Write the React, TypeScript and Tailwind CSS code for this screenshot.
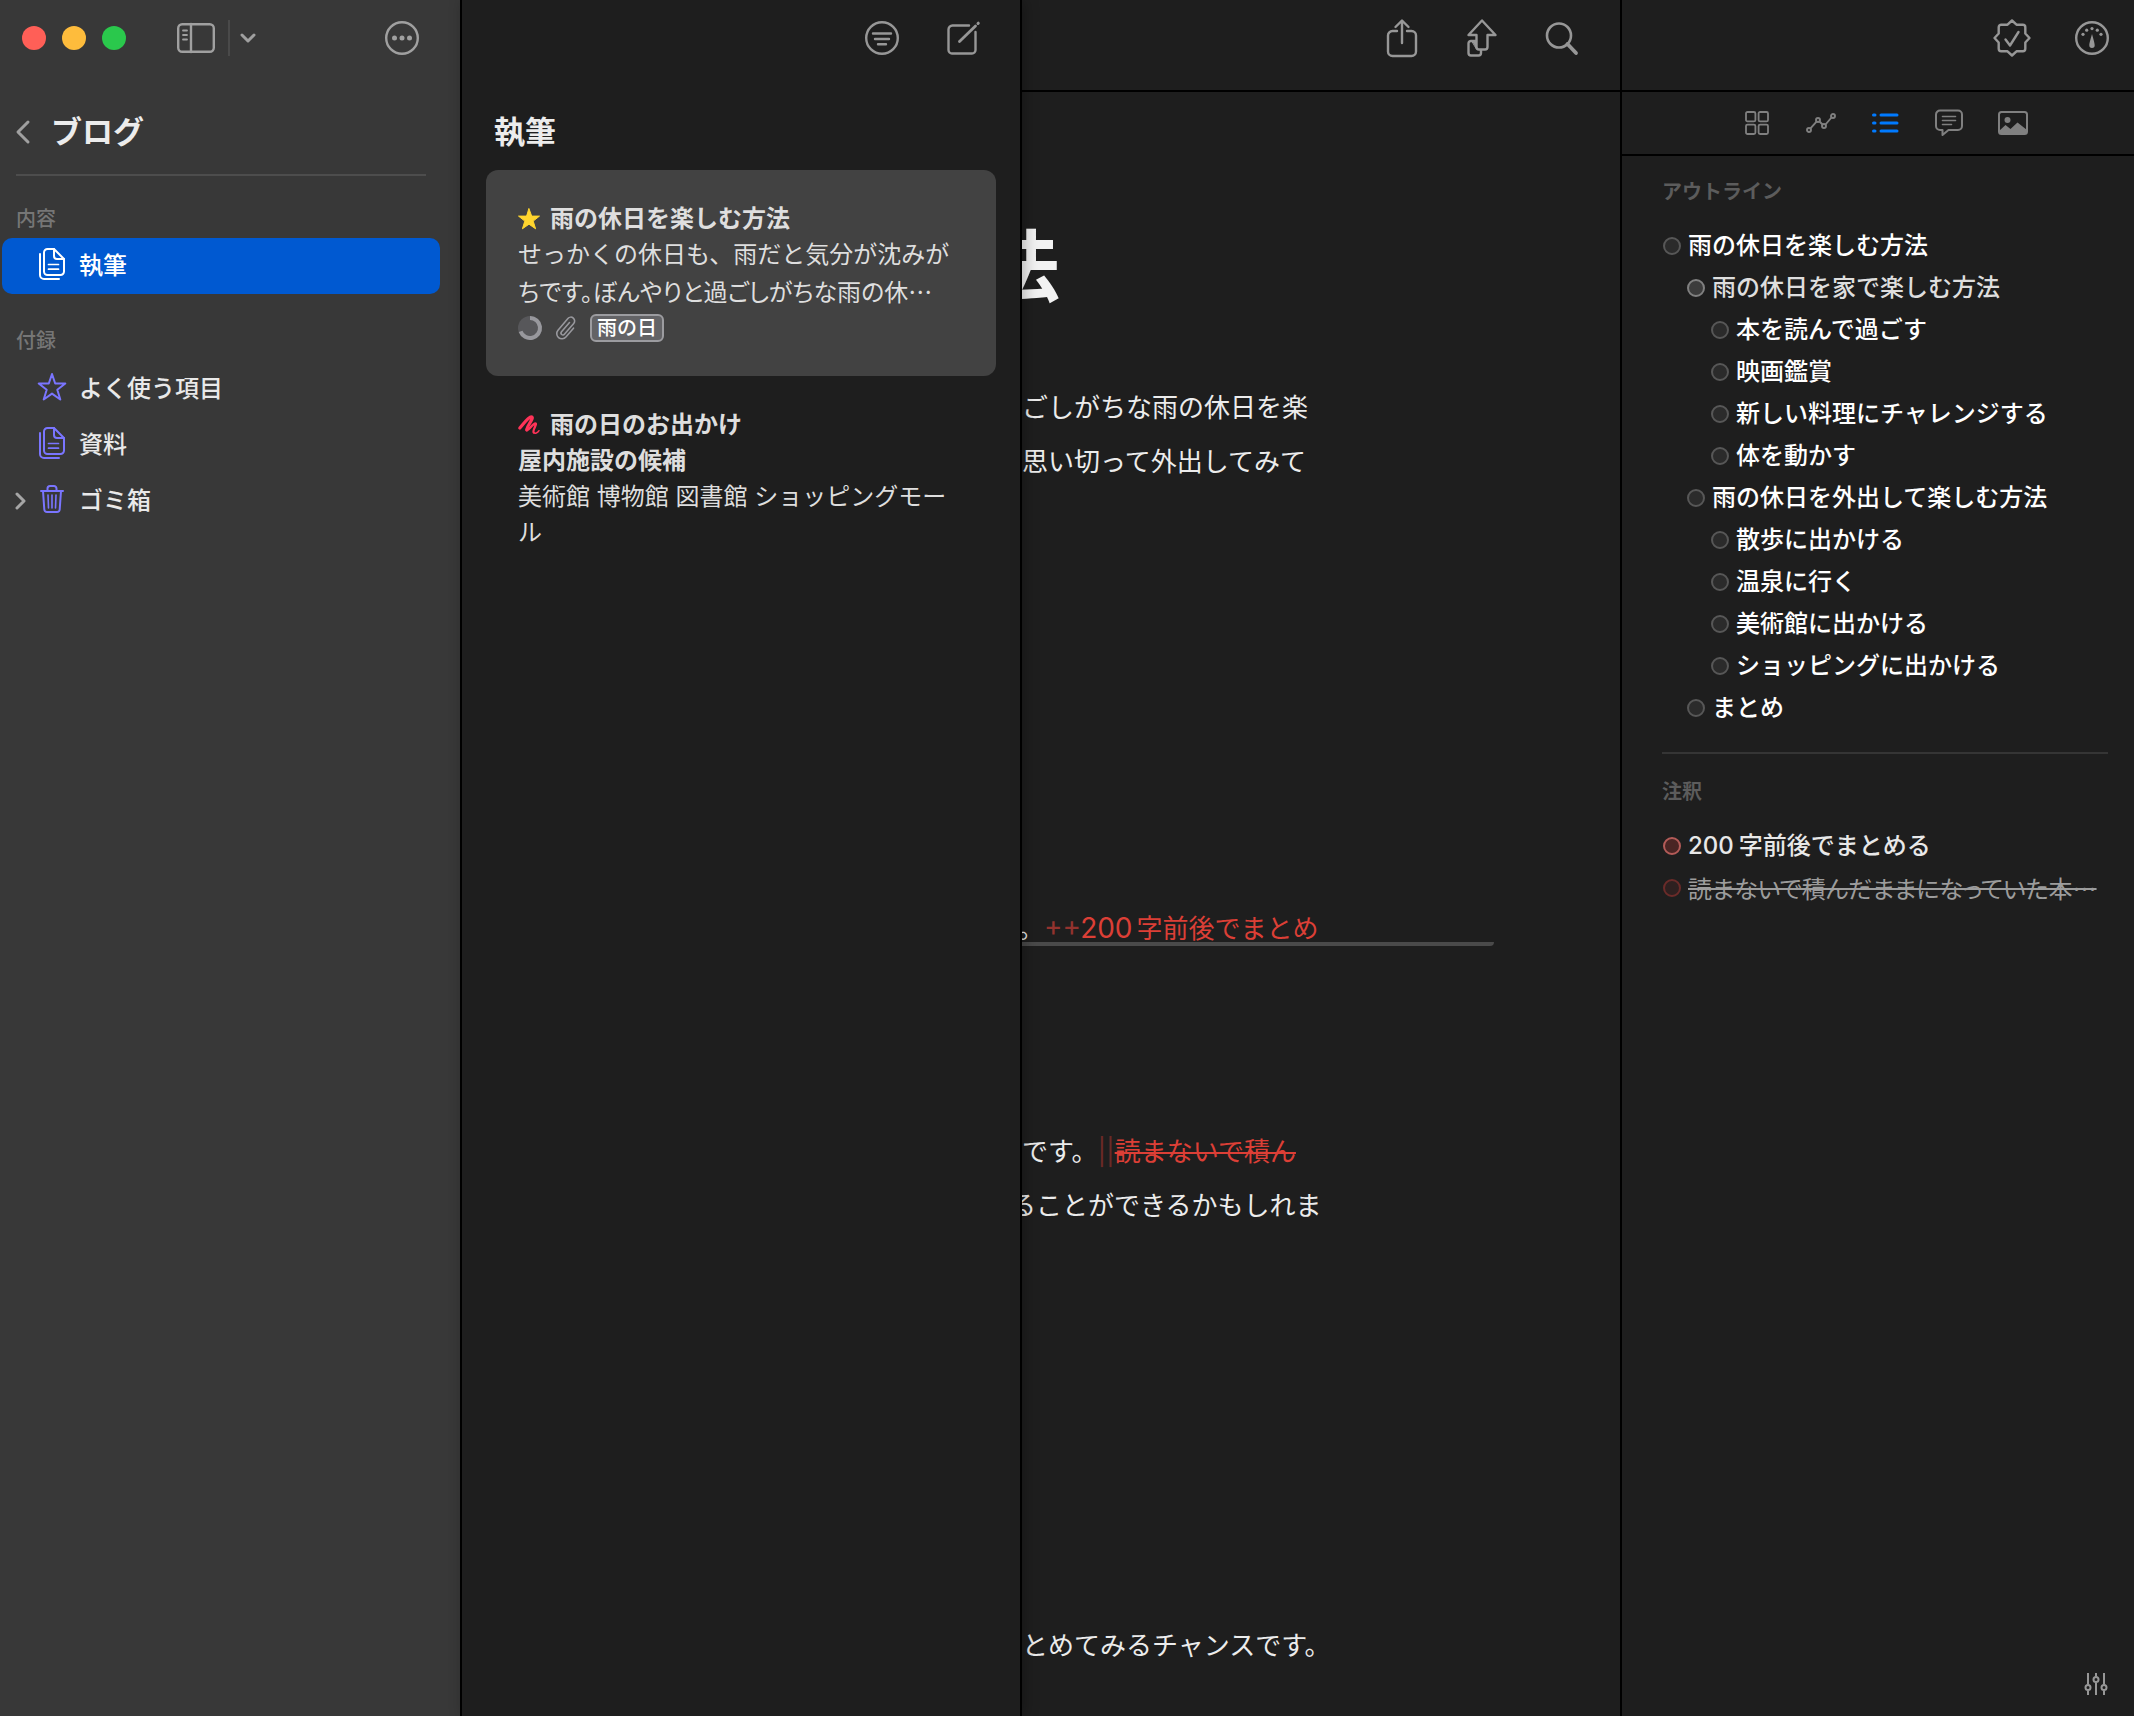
import type { ReactNode } from "react";

type IconProps = { w: number; h: number; sw?: number; className?: string; children: ReactNode };

function Icon({ w, h, sw = 2.4, className = "", children }: IconProps) {
  return (
    <svg
      width={w}
      height={h}
      viewBox={`0 0 ${w} ${h}`}
      fill="none"
      stroke="currentColor"
      strokeWidth={sw}
      strokeLinecap="round"
      strokeLinejoin="round"
      aria-hidden="true"
      className={`shrink-0 overflow-visible ${className}`}
    >
      {children}
    </svg>
  );
}

const SidebarIcon = () => (
  <Icon w={38} h={30}>
    <rect x="1.200" y="1.200" width="35.600" height="27.600" rx="4" />
    <path d="M14 1v28" />
    <path d="M6 7.500h4M6 12h4M6 16.500h4" strokeWidth="1.800" />
  </Icon>
);

const DocsIcon = () => (
  <Icon w={26} h={32} sw={2}>
    <path d="M1 6v21a4 4 0 0 0 4 4h15" />
    <path d="M15 1H8.500a3.500 3.500 0 0 0-3.500 3.500V23.500a3.500 3.500 0 0 0 3.500 3.500h13a3.500 3.500 0 0 0 3.500-3.500V11Z" />
    <path d="M15 1v7a3 3 0 0 0 3 3h7" />
    <path d="M9.500 16.500h10M9.500 21.200h10" strokeWidth="1.700" />
  </Icon>
);

const StarIcon = () => (
  <Icon w={28} h={28} sw={2}>
    <path d="M14 1l3.200 9.500H27.300l-8 6.200 3 9.800-8.300-5.900-8.300 5.900 3-9.800-8-6.200h10.100Z" />
  </Icon>
);

const TrashIcon = () => (
  <Icon w={24} h={28} sw={2}>
    <path d="M1 6h22M7.500 6V3.500a2.500 2.500 0 0 1 2.500-2.500h4a2.500 2.500 0 0 1 2.500 2.500V6" />
    <path d="M3 6l1.300 18.500a2.800 2.800 0 0 0 2.800 2.500h9.800a2.800 2.800 0 0 0 2.800-2.500L21 6" />
    <path d="M8 10l.5 13M12 10v13M16 10l-.5 13" strokeWidth="1.600" />
  </Icon>
);

const MoreIcon = () => (
  <Icon w={34} h={34}>
    <circle cx="17" cy="17" r="15.800" />
    <g fill="currentColor" stroke="none">
      <circle cx="9.500" cy="17" r="2.500" />
      <circle cx="17" cy="17" r="2.500" />
      <circle cx="24.500" cy="17" r="2.500" />
    </g>
  </Icon>
);

const FilterIcon = () => (
  <Icon w={34} h={34}>
    <circle cx="17" cy="17" r="15.800" />
    <path d="M8 12.500h18M10 18h14M13 23.300h8" />
  </Icon>
);

const ComposeIcon = () => (
  <Icon w={34} h={34}>
    <path d="M22 4.500H5.500a4 4 0 0 0-4 4V29A3.500 3.500 0 0 0 5 32.500H25a3.500 3.500 0 0 0 3.500-3.500V11" />
    <path d="M12.500 20.500L28.500 5" strokeWidth="2.800" />
    <path d="M31 2.500l.3-.3" strokeWidth="3" />
  </Icon>
);

const ShareIcon = () => (
  <Icon w={30} h={38}>
    <path d="M10 12H5.500A4.500 4.500 0 0 0 1 16.500v16A4.500 4.500 0 0 0 5.500 37h19a4.500 4.500 0 0 0 4.500-4.500v-16a4.500 4.500 0 0 0-4.500-4.500H20" />
    <path d="M15 24V2M8.500 8L15 1.500 21.500 8" />
  </Icon>
);

const PublishIcon = () => (
  <Icon w={30} h={38}>
    <path d="M15 1.500l13.500 14.500h-8v12a2.500 2.500 0 0 1-2.500 2.500h-6a2.500 2.500 0 0 1-2.500-2.500V16h-8Z" />
    <path d="M9 22H4.500a2.500 2.500 0 0 0-3 2.500V34a2.500 2.500 0 0 0 2.500 2.500h7.500A2.500 2.500 0 0 0 14 34v-3" />
    <path d="M5 22h4v7Z" fill="currentColor" strokeWidth="1" />
  </Icon>
);

const SearchIcon = () => (
  <Icon w={34} h={34}>
    <circle cx="14" cy="14.500" r="12" strokeWidth="2.600" />
    <path d="M22.500 23l8.500 9" strokeWidth="3.800" />
  </Icon>
);

const BadgeIcon = () => (
  <Icon w={38} h={38}>
    <path d="M19 1.500l4.500 4.200h6.300a2.500 2.500 0 0 1 2.500 2.500v6.300L36.500 19l-4.200 4.500v6.300a2.500 2.500 0 0 1-2.500 2.500h-6.300L19 36.500l-4.500-4.200H8.200a2.500 2.500 0 0 1-2.500-2.500v-6.300L1.500 19l4.200-4.500V8.200a2.500 2.500 0 0 1 2.500-2.500h6.300Z" />
    <path d="M12.500 20.500l4.500 6 8.500-13.500" />
  </Icon>
);

const GaugeIcon = () => (
  <Icon w={34} h={34}>
    <circle cx="17" cy="17" r="15.800" />
    <g fill="currentColor" stroke="none">
      <circle cx="8" cy="13.300" r="1.600" />
      <circle cx="11.700" cy="9.200" r="1.600" />
      <circle cx="17" cy="7.600" r="1.600" />
      <circle cx="22.300" cy="9.200" r="1.600" />
      <circle cx="26" cy="13.300" r="1.600" />
      <path d="M17 13c.8 3 2.700 9 2.700 11.200a2.700 2.700 0 0 1-5.400 0C14.300 22 16.200 16 17 13Z" />
    </g>
  </Icon>
);

const GridIcon = () => (
  <Icon w={24} h={24} sw={1.8}>
    <rect x="1" y="1" width="9.400" height="9.400" rx="1.500" />
    <rect x="13.600" y="1" width="9.400" height="9.400" rx="1.500" />
    <rect x="1" y="13.600" width="9.400" height="9.400" rx="1.500" />
    <rect x="13.600" y="13.600" width="9.400" height="9.400" rx="1.500" />
  </Icon>
);

const ChartIcon = () => (
  <Icon w={30} h={20} sw={1.9}>
    <circle cx="3" cy="17" r="2" />
    <circle cx="12" cy="7" r="2" />
    <circle cx="18" cy="13" r="2" />
    <circle cx="27" cy="3" r="2" />
    <path d="M4.500 15.300l6-6.700M13.500 8.500l3 3M19.500 11.500l6-7" />
  </Icon>
);

const ListIcon = () => (
  <Icon w={28} h={20} sw={3}>
    <path d="M2.500 2h1.500M10 2h16M2.500 10h1.500M10 10h16M2.500 18h1.500M10 18h16" />
  </Icon>
);

const CommentIcon = () => (
  <Icon w={28} h={28} sw={2}>
    <path d="M5 1.500h18a4 4 0 0 1 4 4v11.500a4 4 0 0 1-4 4H13.500L7.500 26v-5H5a4 4 0 0 1-4-4V5.500a4 4 0 0 1 4-4Z" />
    <path d="M7.500 7.500h13M7.500 11.500h13M7.500 15.500h9" strokeWidth="1.600" />
  </Icon>
);

const ImageIcon = () => (
  <Icon w={30} h={24} sw={2}>
    <rect x="1" y="1" width="28" height="22" rx="2.500" />
    <circle cx="9.500" cy="9" r="3" fill="currentColor" stroke="none" />
    <path d="M1 20l6.500-6 5 4 7-6.500L29 19v2a2 2 0 0 1-2 2H3a2 2 0 0 1-2-2Z" fill="currentColor" stroke="none" />
  </Icon>
);

const SlidersIcon = () => (
  <Icon w={24} h={24} sw={2}>
    <path d="M4 1v11.500M4 18.500V23M12 1v3.500M12 10.500V23M20 1v11.500M20 18.500V23" strokeLinecap="butt" />
    <circle cx="4" cy="15.500" r="2.500" />
    <circle cx="12" cy="7.500" r="2.500" />
    <circle cx="20" cy="15.500" r="2.500" />
  </Icon>
);

const FilledStar = () => (
  <Icon w={22} h={22} sw={1} className="text-[#ffd52e]">
    <path d="M11 .8l2.700 7.300h7.800l-6.300 5 2.400 7.700L11 16.200l-6.600 4.600L6.800 13.100.5 8.100h7.800Z" fill="currentColor" />
  </Icon>
);

const Squiggle = () => (
  <Icon w={22} h={22} className="text-[#ff3358]">
    <path d="M1.800 14C6 9 10.500 2.800 13.300 2.800c4.200 0-6.300 12-4.600 13.200" strokeWidth="3.200" />
    <path d="M8.700 16c1.300 1.200 6.300-6.500 8.600-6.500 2.500 0-3.300 7-1.600 9" strokeWidth="2.300" />
    <path d="M15.700 18.500c1.300 1.500 3.800.5 5.300-1.800" strokeWidth="1.500" />
  </Icon>
);

const ProgressRing = () => (
  <Icon w={24} h={24}>
    <circle cx="12" cy="12" r="12" fill="#57575a" stroke="none" />
    <path d="M12 2a10 10 0 1 1-9.400 13.400" stroke="#98989d" strokeWidth="4" strokeLinecap="butt" />
  </Icon>
);

const ClipIcon = () => (
  <Icon w={20} h={24} sw={1.600} className="text-[#98989d]">
    <path d="M13.500 6.500l-8 9.300a1.900 1.900 0 0 0 2.900 2.500l9.300-10.800a3.800 3.800 0 0 0-5.800-5L2 14.200a5.200 5.200 0 0 0 7.900 6.800l7.600-8.800" />
  </Icon>
);

function ToolButton({ label, children }: { label: string; children: ReactNode }) {
  return (
    <button type="button" aria-label={label} className="flex size-10 items-center justify-center">
      {children}
    </button>
  );
}

function NavRow({
  icon,
  label,
  selected = false,
  expandable = false,
}: {
  icon: ReactNode;
  label: string;
  selected?: boolean;
  expandable?: boolean;
}) {
  return (
    <li>
      <button
        type="button"
        className={`flex h-14 w-full items-center rounded-[10px] text-left text-2xl font-medium ${
          selected ? "bg-[#0059d1] text-white" : "text-[#e9e9e9]"
        }`}
      >
        <span className="flex w-9 items-center pl-[13px] text-[#a6a6a6]">
          {expandable && (
            <Icon w={12} h={18} sw={3}>
              <path d="M2 2l7 7-7 7" />
            </Icon>
          )}
        </span>
        <span className={`flex w-7 justify-center pb-1 ${selected ? "text-white" : "text-[#7a75ff]"}`}>{icon}</span>
        <span className="pl-[13px]">{label}</span>
      </button>
    </li>
  );
}

function Sidebar() {
  return (
    <nav className="w-[462px] shrink-0 border-r-2 border-black bg-[#383838]">
      <div className="flex h-[76px] items-center pr-[41px] pl-[22px] text-[#a0a0a0]">
        <div className="flex gap-4">
          <button type="button" aria-label="閉じる" className="size-6 rounded-full bg-[#ff5f57]" />
          <button type="button" aria-label="しまう" className="size-6 rounded-full bg-[#febc3c]" />
          <button type="button" aria-label="拡大" className="size-6 rounded-full bg-[#2ac84c]" />
        </div>
        <button type="button" aria-label="サイドバー" className="ml-[51px]">
          <SidebarIcon />
        </button>
        <span className="ml-[13px] h-9 w-0.5 bg-[#4a4a4a]" />
        <button type="button" aria-label="表示" className="ml-[10px]">
          <Icon w={16} h={12} sw={3}>
            <path d="M2 3l6 6 6-6" />
          </Icon>
        </button>
        <button type="button" aria-label="その他" className="ml-auto">
          <MoreIcon />
        </button>
      </div>
      <div className="mr-[34px] ml-4 flex h-[100px] items-center border-b-2 border-[#4d4d4d] pt-[14px]">
        <button type="button" aria-label="戻る" className="text-[#a0a0a0]">
          <Icon w={15} h={26} sw={3}>
            <path d="M12 3L2 13l10 10" />
          </Icon>
        </button>
        <h1 className="pl-5 text-[31px] leading-10 font-bold text-[#ececec]">ブログ</h1>
      </div>
      <h2 className="px-4 pt-[29px] pb-[5px] text-xl leading-7 font-medium text-[#767676]">内容</h2>
      <ul className="mr-5 ml-0.5">
        <NavRow icon={<DocsIcon />} label="執筆" selected />
      </ul>
      <h2 className="px-4 pt-[33px] pb-[6px] text-xl leading-7 font-medium text-[#767676]">付録</h2>
      <ul className="mr-5 ml-0.5">
        <NavRow icon={<StarIcon />} label="よく使う項目" />
        <NavRow icon={<DocsIcon />} label="資料" />
        <NavRow icon={<TrashIcon />} label="ゴミ箱" expandable />
      </ul>
    </nav>
  );
}

function SheetList() {
  return (
    <section className="relative z-10 w-[560px] shrink-0 border-r-2 border-black bg-[#1e1e1e] shadow-[2px_0_14px_rgba(0,0,0,0.3)]">
      <div className="flex h-[76px] items-center justify-end gap-[42px] pr-9 text-[#979797]">
        <ToolButton label="フィルタ">
          <FilterIcon />
        </ToolButton>
        <ToolButton label="新規シート">
          <ComposeIcon />
        </ToolButton>
      </div>
      <h2 className="px-8 pt-9 pb-[18px] text-[31px] leading-10 font-bold text-[#ececec]">執筆</h2>
      <div className="mr-6 ml-6 text-2xl leading-9 text-[#dedede]">
        <article className="h-[206px] rounded-xl bg-[#424242] px-8 pt-[31px]">
          <h3 className="flex items-center gap-[10px] font-bold">
            <FilledStar />
            雨の休日を楽しむ方法
          </h3>
          <p>せっかくの休日も、雨だと気分が沈みが</p>
          <p className="h-9 font-['Noto_Sans_CJK_JP',sans-serif] whitespace-nowrap [font-feature-settings:'palt']">
            ちです。ぼんやりと過ごしがちな雨の休⋯
          </p>
          <div className="flex items-center gap-[14px] pt-[5px]">
            <ProgressRing />
            <ClipIcon />
            <span className="flex h-7 items-center rounded-md border-2 border-[#9c9ca0] bg-[#636366] px-[5px] text-xl font-medium text-white">
              雨の日
            </span>
          </div>
        </article>
        <article className="px-8 pt-[31px]">
          <h3 className="flex items-center gap-[10px] font-bold">
            <Squiggle />
            雨の日のお出かけ
          </h3>
          <p className="font-bold">屋内施設の候補</p>
          <p>美術館 博物館 図書館 ショッピングモール</p>
        </article>
      </div>
    </section>
  );
}

function Editor() {
  return (
    <main className="min-w-0 flex-1 overflow-hidden">
      <div className="flex h-[92px] justify-end gap-10 border-b-2 border-black pt-[18px] pr-[38px] text-[#979797]">
        <ToolButton label="共有">
          <ShareIcon />
        </ToolButton>
        <ToolButton label="公開">
          <PublishIcon />
        </ToolButton>
        <ToolButton label="検索">
          <SearchIcon />
        </ToolButton>
      </div>
      <article className="mr-[126px] text-[26px] leading-[54px] whitespace-nowrap text-[#ececec]">
        <h1 className="flex w-[38px] justify-end pt-[136px] text-[78px] leading-[80px] font-bold text-[#f2f2f2]">
          法
        </h1>
        <p className="pt-[73px]">
          ごしがちな雨の休日を楽
          <br />
          思い切って外出してみて
        </p>
        <div className="mt-[425px] rounded-r-sm border-b-4 border-[#4a4a4a]">
          <p className="-ml-1 h-7 leading-7">
            。<span className="text-[28px] text-[#93332e]">++</span>
            <span className="text-[#dc3f36]">
              <span className="mr-1 text-[28px]">200</span>字前後でまとめ
            </span>
          </p>
        </div>
        <p className="pt-[179px]">
          です。<span className="text-[#6b2a27]">||</span>
          <del className="text-[#dc3f36] line-through decoration-2">読まないで積ん</del>
        </p>
        <p className="-ml-3">ることができるかもしれま</p>
        <p className="pt-[386px]">とめてみるチャンスです。</p>
      </article>
    </main>
  );
}

const outline = [
  { level: 0, text: "雨の休日を楽しむ方法" },
  { level: 1, text: "雨の休日を家で楽しむ方法", hovered: true },
  { level: 2, text: "本を読んで過ごす" },
  { level: 2, text: "映画鑑賞" },
  { level: 2, text: "新しい料理にチャレンジする" },
  { level: 2, text: "体を動かす" },
  { level: 1, text: "雨の休日を外出して楽しむ方法" },
  { level: 2, text: "散歩に出かける" },
  { level: 2, text: "温泉に行く" },
  { level: 2, text: "美術館に出かける" },
  { level: 2, text: "ショッピングに出かける" },
  { level: 1, text: "まとめ" },
];

const indents = ["pl-px", "pl-[25px]", "pl-[49px]"];

function Inspector() {
  const row = "flex h-[42px] items-center gap-[7px] text-2xl font-medium whitespace-nowrap";
  const dot = "size-[18px] shrink-0 rounded-full border-2";
  return (
    <aside className="flex w-[514px] shrink-0 flex-col border-l-2 border-black">
      <div className="flex h-[92px] justify-end gap-10 border-b-2 border-black pt-[18px] pr-[22px] text-[#979797]">
        <ToolButton label="校正">
          <BadgeIcon />
        </ToolButton>
        <ToolButton label="目標">
          <GaugeIcon />
        </ToolButton>
      </div>
      <div className="flex h-16 items-center justify-center gap-6 border-b-2 border-black pl-[14px] text-[#808080]">
        <ToolButton label="概要">
          <GridIcon />
        </ToolButton>
        <ToolButton label="進捗">
          <ChartIcon />
        </ToolButton>
        <span className="flex text-[#007aff]">
          <ToolButton label="アウトライン">
            <ListIcon />
          </ToolButton>
        </span>
        <ToolButton label="注釈">
          <CommentIcon />
        </ToolButton>
        <ToolButton label="メディア">
          <ImageIcon />
        </ToolButton>
      </div>
      <div className="mr-[26px] ml-10">
        <h2 className="pt-[22px] pb-[19px] text-xl leading-7 font-semibold text-[#5c5c5c]">アウトライン</h2>
        <ul className="border-b-2 border-[#353535] pb-[23px]">
          {outline.map((item) => (
            <li key={item.text} className={indents[item.level]}>
              <button type="button" className={`${row} ${item.hovered ? "text-[#dedede]" : "text-white"}`}>
                <span
                  className={`${dot} ${item.hovered ? "border-[#808080] bg-[#3c3c3c]" : "border-[#575757] bg-[#2b2b2b]"}`}
                />
                {item.text}
              </button>
            </li>
          ))}
        </ul>
        <h2 className="pt-6 pb-[19px] text-xl leading-7 font-semibold text-[#5c5c5c]">注釈</h2>
        <ul className="pl-px">
          <li>
            <button type="button" className={`${row} text-[#e8e8e8]`}>
              <span className={`${dot} border-[#b35b58] bg-[#4a2524]`} />
              <span>
                <span className="mr-[5px]">200</span>字前後でまとめる
              </span>
            </button>
          </li>
          <li>
            <button type="button" className={`${row} text-[#9c9c9c]`}>
              <span className={`${dot} border-[#6b2b29] bg-[#2e2020]`} />
              <del className="font-['Noto_Sans_CJK_JP',sans-serif] font-normal line-through decoration-2 [font-feature-settings:'palt']">
                読まないで積んだままになっていた本⋯
              </del>
            </button>
          </li>
        </ul>
      </div>
      <button type="button" aria-label="設定" className="mt-auto mr-[26px] mb-5 ml-auto text-[#979797]">
        <SlidersIcon />
      </button>
    </aside>
  );
}

export default function App() {
  return (
    <div
      lang="ja"
      className="flex min-h-screen w-full bg-[#1e1e1e] font-['Inter','Noto_Sans_CJK_JP',sans-serif] antialiased"
    >
      <Sidebar />
      <SheetList />
      <Editor />
      <Inspector />
    </div>
  );
}
